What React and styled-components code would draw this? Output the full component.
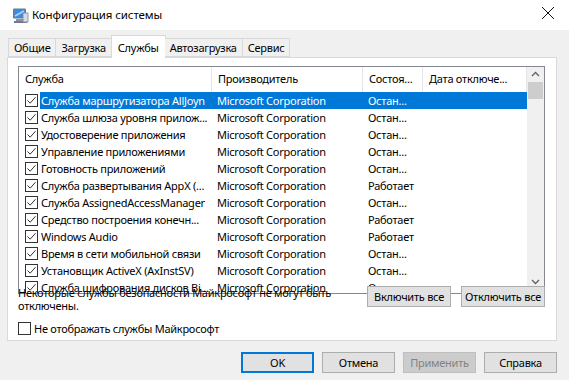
import React from 'react'
import styled, { createGlobalStyle } from 'styled-components'

const Global = createGlobalStyle`
  html, body { margin: 0; padding: 0; }
  body {
    font-family: "Noto Sans", "Open Sans", sans-serif;
    font-size: 11px;
    letter-spacing: -0.25px;
    color: #000;
    background: #f0f0f0;
  }
`;

const Window = styled.div`
  width: 569px;
  height: 380px;
  display: flex;
  flex-direction: column;
  background: #f0f0f0;
  overflow: hidden;
`;

const TitleBar = styled.div`
  height: 30px;
  flex: none;
  background: #fff;
  display: flex;
  align-items: center;
  padding: 0 12px 0 12px;
  gap: 3px;
  >span{ flex: 1; font-size: 11.5px; letter-spacing: -0.1px; margin-top: -2px; }
`;

const Close = styled.svg`
  width: 14px;
  height: 14px;
  margin-right: 2px;
  margin-top: -4px;
`;

const Body = styled.div`
  flex: 1;
  padding: 6px 12px 0 7px;
  display: flex;
  flex-direction: column;
`;

const Tabs = styled.div`
  display: flex;
  align-items: flex-end;
  height: 21px;
  padding-left: 1px;
  position: relative;
  z-index: 1;
`;

const Tab = styled.div`
  height: ${p => p.active ? '22px' : '17px'};
  padding: 0 ${p => p.active ? '6px' : '5px'};
  margin: ${p => p.active ? '0 -1px -1px -1px' : '0'};
  border: 1px solid #d9d9d9;
  border-bottom: ${p => p.active ? 'none' : '1px solid #d9d9d9'};
  border-left: ${p => p.first || p.active ? '1px solid #d9d9d9' : 'none'};
  background: ${p => p.active ? '#fff' : '#f0f0f0'};
  display: flex;
  align-items: center;
  line-height: 1;
`;

const Panel = styled.div`
  height: 284px;
  flex: none;
  background: #fff;
  border: 1px solid #d9d9d9;
  box-sizing: border-box;
  padding: 8px 11px 0 10px;
  display: flex;
  flex-direction: column;
`;

const List = styled.div`
  height: 228px;
  flex: none;
  border: 1px solid #828790;
  box-sizing: border-box;
  display: flex;
  overflow: hidden;
`;

const Grid = styled.div`
  flex: 1;
  display: flex;
  flex-direction: column;
`;

const Header = styled.div`
  height: 25px;
  flex: none;
  display: grid;
  grid-template-columns: 193px 151px 60px 1fr;
  >div{
    border-right: 1px solid #e5e5e5;
    padding: 0 0 2px 6px;
    display: flex;
    align-items: center;
    white-space: nowrap;
    overflow: hidden;
  }
`;

const Row = styled.div`
  height: 17px;
  flex: none;
  display: grid;
  grid-template-columns: 21px 1fr;
  align-items: center;
`;

const Cells = styled.div`
  height: 17px;
  display: grid;
  grid-template-columns: 172px 151px 60px 1fr;
  align-items: center;
  background: ${p => p.selected ? '#0078d7' : 'transparent'};
  color: ${p => p.selected ? '#fff' : '#000'};
  >span{
    white-space: nowrap;
    overflow: hidden;
    padding-left: 5px;
  }
  >span:first-child{ padding-left: 1px; }
`;

const Box = styled.span`
  width: 13px;
  height: 13px;
  box-sizing: border-box;
  border: 1px solid #333;
  background: #fff;
  display: inline-flex;
  align-items: center;
  justify-content: center;
  margin-left: ${p => p.inset || 0}px;
  flex: none;
`;

const Scroll = styled.div`
  width: 17px;
  background: #f0f0f0;
  display: flex;
  flex-direction: column;
  align-items: center;
  padding-bottom: 8px;
  box-sizing: border-box;
  >svg{ margin-top: 4px; flex: none; }
  >svg:last-child{ margin-top: auto; }
`;

const Thumb = styled.div`
  width: 15px;
  height: 17px;
  margin-top: 5px;
  background: #cdcdcd;
`;

const Footer = styled.div`
  display: flex;
  align-items: flex-start;
  margin-top: -8px;
  position: relative;
`;

const Note = styled.div`
  flex: 1;
  line-height: 13px;
  white-space: nowrap;
`;

const SmallButton = styled.div`
  width: 84px;
  height: 21px;
  box-sizing: border-box;
  margin: 0 0 0 10px;
  border: 1px solid #adadad;
  background: #e1e1e1;
  display: flex;
  align-items: center;
  justify-content: center;
  white-space: nowrap;
`;

const Hide = styled.label`
  display: flex;
  align-items: center;
  gap: 3px;
  margin-top: 9px;
`;

const Buttons = styled.div`
  display: flex;
  justify-content: flex-end;
  gap: 8px;
  padding-top: 11px;
`;

const Button = styled.div`
  width: 73px;
  height: 21px;
  box-sizing: border-box;
  border: ${p => p.primary ? '2px solid #0078d7' : '1px solid ' + (p.disabled ? '#bfbfbf' : '#adadad')};
  background: ${p => p.disabled ? '#cccccc' : '#e1e1e1'};
  color: ${p => p.disabled ? '#838383' : '#000'};
  display: flex;
  align-items: center;
  justify-content: center;
`;

const Check = () => (
  <svg width="11" height="11" viewBox="0 0 11 11">
    <path d="M1.5 5.5 L4.2 8.2 L9.5 2.2" fill="none" stroke="#333" strokeWidth="1" />
  </svg>
);

const Chevron = ({ down }) => (
  <svg width="9" height="6" viewBox="0 0 9 6">
    <path d={down ? 'M1 1 L4.5 4.5 L8 1' : 'M1 5 L4.5 1.5 L8 5'} fill="none" stroke="#606060" strokeWidth="1.3" />
  </svg>
);

const AppIcon = () => (
  <svg width="17" height="17" viewBox="0 0 17 17">
    <rect x="1" y="1.5" width="13" height="10" rx="1" fill="#6e7a93" />
    <rect x="2.5" y="3" width="10" height="7" fill="#3b8de0" />
    <path d="M3 9 L12 4" stroke="#a9d3ff" strokeWidth="1.5" />
    <rect x="4" y="12" width="8" height="2" fill="#8a93a8" />
    <rect x="2" y="14" width="13" height="2" fill="#6e7a93" />
    <rect x="11" y="6" width="5" height="9" fill="#d8dbe2" stroke="#7d8597" strokeWidth="0.8" />
  </svg>
);

const services = [
  ['Служба маршрутизатора AllJoyn', 'Остан...'],
  ['Служба шлюза уровня прилож...', 'Остан...'],
  ['Удостоверение приложения', 'Остан...'],
  ['Управление приложениями', 'Остан...'],
  ['Готовность приложений', 'Остан...'],
  ['Служба развертывания AppX (...', 'Работает'],
  ['Служба AssignedAccessManager', 'Остан...'],
  ['Средство построения конечн...', 'Работает'],
  ['Windows Audio', 'Работает'],
  ['Время в сети мобильной связи', 'Остан...'],
  ['Установщик ActiveX (AxInstSV)', 'Остан...'],
  ['Служба шифрования дисков Bi...', 'Остан...'],
];

const tabs = ['Общие', 'Загрузка', 'Службы', 'Автозагрузка', 'Сервис'];

export default function App() {
  return (
    <Window>
      <Global />
      <TitleBar>
        <AppIcon />
        <span>Конфигурация системы</span>
        <Close viewBox="0 0 14 14">
          <path d="M1 1 L13 13 M13 1 L1 13" stroke="#111" strokeWidth="1" />
        </Close>
      </TitleBar>
      <Body>
        <Tabs>
          {tabs.map((t, i) => (
            <Tab key={t} first={i === 0} active={t === 'Службы'}>{t}</Tab>
          ))}
        </Tabs>
        <Panel>
          <List>
            <Grid>
              <Header>
                <div>Служба</div>
                <div>Производитель</div>
                <div>Состоя...</div>
                <div>Дата отключе...</div>
              </Header>
              {services.map(([name, state], i) => (
                <Row key={name}>
                  <Box inset={6}><Check /></Box>
                  <Cells selected={i === 0}>
                    <span>{name}</span>
                    <span>Microsoft Corporation</span>
                    <span>{state}</span>
                    <span></span>
                  </Cells>
                </Row>
              ))}
            </Grid>
            <Scroll>
              <Chevron />
              <Thumb />
              <Chevron down />
            </Scroll>
          </List>
          <Footer>
            <Note>Некоторые службы безопасности Майкрософт не могут быть<br />отключены.</Note>
            <SmallButton>Включить все</SmallButton>
            <SmallButton>Отключить все</SmallButton>
          </Footer>
          <Hide>
            <Box />
            <span>Не отображать службы Майкрософт</span>
          </Hide>
        </Panel>
        <Buttons>
          <Button primary>OK</Button>
          <Button>Отмена</Button>
          <Button disabled>Применить</Button>
          <Button>Справка</Button>
        </Buttons>
      </Body>
    </Window>
  )
}
